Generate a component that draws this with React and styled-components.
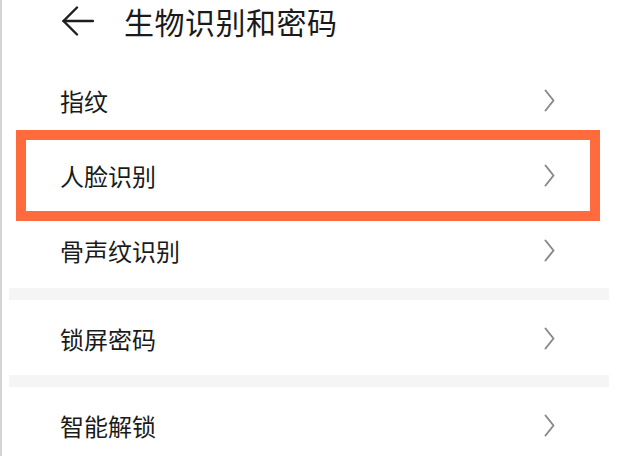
import React from 'react';
import styled, { createGlobalStyle } from 'styled-components';

const GlobalStyle = createGlobalStyle`
    html, body {
        margin: 0;
        padding: 0;
        background: #fff;
    }
    body {
        font-family: "Noto Sans CJK SC", "Noto Sans", sans-serif;
        color: #1a1a1a;
    }
`;

const Page = styled.div`
    width: 632px;
    height: 456px;
    box-sizing: border-box;
    border-left: 2px solid #d4d4d4;
    overflow: hidden;
    background: #fff;
`;

const Header = styled.header`
    height: 63px;
    display: flex;
    align-items: center;
    padding: 0 0 22px 60px;
    box-sizing: border-box;
    gap: 30px;

    h1 {
        margin: 0;
        font-size: 30px;
        font-weight: 400;
        line-height: 40px;
        letter-spacing: 0.5px;
    }
`;

const List = styled.div`
    margin-left: 7px;
    width: 600px;
    display: flex;
    flex-direction: column;
`;

const Row = styled.div`
    position: relative;
    height: 75px;
    display: flex;
    align-items: center;
    justify-content: space-between;
    padding: ${p => p.$low ? '2px' : '0'} 54px 0 51px;
    box-sizing: border-box;
    font-size: 24px;
    line-height: 30px;
`;

const Highlight = styled.div`
    position: absolute;
    top: -8px;
    bottom: -8px;
    left: 7px;
    right: 9px;
    border: 10px solid #ff6b3d;
    pointer-events: none;
`;

const Divider = styled.div`
    height: 12px;
    background: #f5f5f5;
`;

const BackArrow = () => (
    <svg width="32" height="30" viewBox="0 0 32 30" fill="none" stroke="#1e1e1e" strokeWidth="2.4" strokeLinecap="round" strokeLinejoin="round">
        <path d="M1.5 15 H31" />
        <path d="M15 1.5 L1.5 15 L15 28.5" />
    </svg>
);

const Chevron = () => (
    <svg width="11" height="23" viewBox="0 0 11 23" fill="none" stroke="#8a8a8a" strokeWidth="2" strokeLinecap="round" strokeLinejoin="round">
        <path d="M1.5 1.5 L9.5 11.5 L1.5 21.5" />
    </svg>
);

const groups = [
    ['指纹', '人脸识别', '骨声纹识别'],
    ['锁屏密码'],
    ['智能解锁'],
];

const App = () => {
    return (
        <>
            <GlobalStyle />
            <Page>
                <Header>
                    <BackArrow />
                    <h1>生物识别和密码</h1>
                </Header>
                <List>
                    {groups.map((items, gi) => (
                        <React.Fragment key={gi}>
                            {gi > 0 && <Divider />}
                            {items.map(label => (
                                <Row key={label} $low={gi > 0}>
                                    <span>{label}</span>
                                    <Chevron />
                                    {label === '人脸识别' && <Highlight />}
                                </Row>
                            ))}
                        </React.Fragment>
                    ))}
                </List>
            </Page>
        </>
    );
};

export default App;
